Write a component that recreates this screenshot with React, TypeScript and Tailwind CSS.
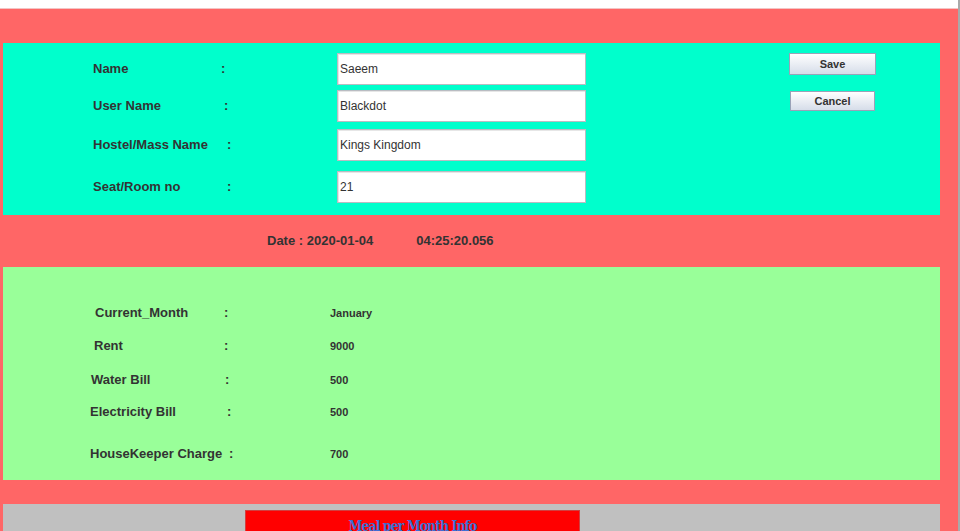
const label = "font-['Liberation_Sans',Arial,sans-serif] font-bold text-[13px] text-[#333333]"
const value = "font-['Liberation_Sans',Arial,sans-serif] font-bold text-[11px] text-[#333333]"

function FormRow({ name, colon, val, mt }: { name: string; colon: string; val: string; mt: string }) {
  return (
    <div className={`flex items-center h-8 ${mt}`}>
      <span className={`${label} ${colon} shrink-0`}>{name}</span>
      <span className={label}>:</span>
      <div className="flex-1" />
      <div className="w-[249px] h-8 bg-white border border-[#b9bcc2] shadow-[inset_1px_1px_0_#e6e6e6] flex items-center px-[2px]">
        <span className="font-['Liberation_Sans',Arial,sans-serif] text-[12px] text-[#333333]">{val}</span>
      </div>
    </div>
  )
}

function InfoRow({ name, colon, pl, val, mt }: { name: string; colon: string; pl: string; val: string; mt: string }) {
  return (
    <div className={`flex items-center h-5 ${mt}`}>
      <div className={`w-[327px] shrink-0 flex items-center ${pl}`}>
        <span className={`${label} ${colon} shrink-0`}>{name}</span>
        <span className={label}>:</span>
      </div>
      <span className={value}>{val}</span>
    </div>
  )
}

function JButton({ text, cls }: { text: string; cls: string }) {
  return (
    <div className={`${cls} bg-gradient-to-b from-white to-[#d6dde9] border border-[#9aa2b8] flex items-center justify-center`}>
      <span className="font-['Liberation_Sans',Arial,sans-serif] font-bold text-[11px] text-[#333333]">{text}</span>
    </div>
  )
}

export default function App() {
  return (
    <div className="h-[531px] w-[960px] overflow-hidden flex bg-white">
      <div className="flex-1 flex flex-col">
        <div className="h-[9px] shrink-0 bg-white border-b border-[#f3c4c4]" />
        <div className="flex-1 bg-[#ff6666] pl-[3px] pr-[18px] pt-[34px] flex flex-col">
          {/* top form */}
          <div className="h-[172px] shrink-0 bg-[#00ffcc] flex pt-[10px]">
            <div className="w-[583px] pl-[90px] flex flex-col">
              <FormRow name="Name" colon="w-[128px]" val="Saeem" mt="" />
              <FormRow name="User Name" colon="w-[131px]" val="Blackdot" mt="mt-[5px]" />
              <FormRow name="Hostel/Mass Name" colon="w-[134px]" val="Kings Kingdom" mt="mt-[7px]" />
              <FormRow name="Seat/Room no" colon="w-[134px]" val="21" mt="mt-[10px]" />
            </div>
            <div className="ml-[203px] flex flex-col">
              <JButton text="Save" cls="w-[87px] h-[22px]" />
              <JButton text="Cancel" cls="w-[85px] h-[20px] ml-px mt-[16px]" />
            </div>
          </div>

          {/* date */}
          <div className="h-[52px] shrink-0 flex items-center pl-[264px] gap-[43px]">
            <span className={label}>Date : 2020-01-04</span>
            <span className={label}>04:25:20.056</span>
          </div>

          {/* bills */}
          <div className="h-[213px] shrink-0 bg-[#99ff99] flex flex-col pt-[36px]">
            <InfoRow name="Current_Month" colon="w-[129px]" pl="pl-[92px]" val="January" mt="" />
            <InfoRow name="Rent" colon="w-[130px]" pl="pl-[91px]" val="9000" mt="mt-[13px]" />
            <InfoRow name="Water Bill" colon="w-[134px]" pl="pl-[88px]" val="500" mt="mt-[14px]" />
            <InfoRow name="Electricity Bill" colon="w-[137px]" pl="pl-[87px]" val="500" mt="mt-[12px]" />
            <InfoRow name="HouseKeeper Charge" colon="w-[139px]" pl="pl-[87px]" val="700" mt="mt-[22px]" />
          </div>

          {/* meal */}
          <div className="mt-[24px] flex-1 bg-[#c0c0c0] pt-[6px] pl-[242px]">
            <div className="w-[335px] h-[40px] bg-[#ff0000] border border-[#d04040] flex justify-center pt-[5px]">
              <span className="font-['DejaVu_Serif_Condensed','DejaVu_Serif',serif] font-bold text-[14px] text-[#3b6fd4] tracking-[-1px]">
                Meal per Month Info
              </span>
            </div>
          </div>
        </div>
      </div>
      <div className="w-[2px] bg-[#a9a9a9]" />
    </div>
  )
}
